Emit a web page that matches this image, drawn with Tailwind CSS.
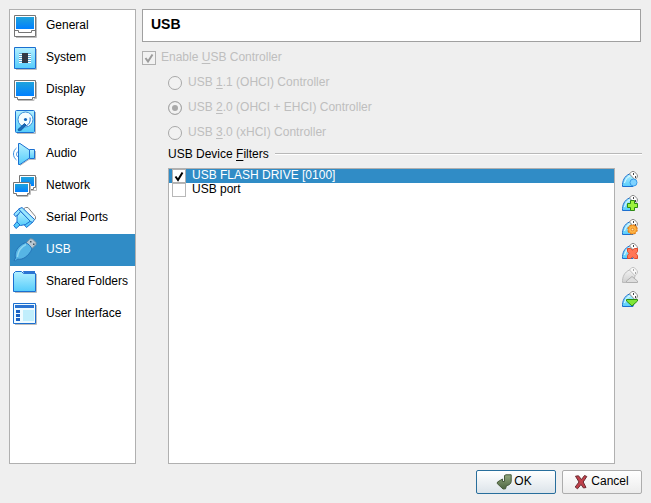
<!DOCTYPE html>
<html lang="en">
<head>
<meta charset="utf-8">
<meta name="viewport" content="width=device-width, initial-scale=1">
<title>USB Settings</title>
<script src="https://cdn.jsdelivr.net/npm/@tailwindcss/browser@4"></script>
</head>
<body class="bg-[#efefef] font-['Liberation_Sans',Arial,sans-serif] text-[12px] leading-[14px] text-black">

<svg class="absolute size-0" aria-hidden="true">
  <defs>
    <linearGradient id="screen" x1="0" y1="0" x2="0" y2="1"><stop offset="0" stop-color="#1fa3dc"/><stop offset="1" stop-color="#0080ff"/></linearGradient>
    <linearGradient id="ice" x1="0" y1="0" x2="0" y2="1"><stop offset="0" stop-color="#b4f0ff"/><stop offset="1" stop-color="#55ccfb"/></linearGradient>
    <linearGradient id="ok" x1="0" y1="0" x2="0" y2="1"><stop offset="0" stop-color="#93a87f"/><stop offset="1" stop-color="#4d6540"/></linearGradient>
    <linearGradient id="steel" x1="0" y1="0" x2="0" y2="1"><stop offset="0" stop-color="#f2f2f2"/><stop offset="1" stop-color="#cfcfcf"/></linearGradient>
    <symbol id="plug" viewBox="0 0 18 18">
      <path d="M1.500 16.500C1.200 11 3.500 6 8.500 4C11.500 5 13.500 7.500 14 10L12 16.500Z" fill="url(#ice)" stroke="#1d6fd0"/>
      <path d="M3.500 13C4.500 9.500 6 7.500 9 6" fill="none" stroke="#e6fbff"/>
      <path d="M8.500 4L10.500 1.800Q12 1 13.500 1.800L16 4.500Q17 6 16 7.500L14 9.800Z" fill="#fff" stroke="#8a8a8a"/>
      <path d="M12 3h1v2h-1zM14 6h1v2h-1z" fill="#444"/>
    </symbol>
  </defs>
</svg>

<div class="flex h-screen flex-col pl-[9px] pr-[9px] pt-[9px] pb-[9px]">
  <div class="flex min-h-0 flex-1 gap-[6px]">

    <nav class="w-[127px] shrink-0 border border-[#b0b0b0] bg-white" aria-label="Settings">
      <a href="#general" class="flex h-8 items-center gap-[9px] pl-[3px]">
        <svg class="size-6 shrink-0" viewBox="0 0 24 24"><path d="M3 23.500H23.500V3" fill="none" stroke="#bdbdbd"/><path d="M1.500 1.500h21v21h-21z" fill="#fff" stroke="#757575"/><path d="M3 3h18v12H3z" fill="url(#screen)"/><path d="M1.500 16.500h4v2h13v-2h4" fill="none" stroke="#757575"/></svg>
        <span class="pb-[2px]">General</span></a>
      <a href="#system" class="flex h-8 items-center gap-[9px] pl-[3px]">
        <svg class="size-6 shrink-0" viewBox="0 0 24 24"><path d="M3 23.500H23.500V3" fill="none" stroke="#bdbdbd"/><path d="M1.500 1.500h21v21h-21z" fill="url(#ice)" stroke="#1b6fd0"/><path d="M6 8.500h12M6 10.500h12M6 12.500h12M6 14.500h12M6 16.500h12" stroke="#fff"/><path d="M6 7.500h12M6 9.500h12M6 11.500h12M6 13.500h12M6 15.500h12" stroke="#5fa9d0"/><path d="M9 7h6v10H9z" fill="#343944"/></svg>
        <span class="pb-[2px]">System</span></a>
      <a href="#display" class="flex h-8 items-center gap-[9px] pl-[3px]">
        <svg class="size-6 shrink-0" viewBox="0 0 24 24"><path d="M5 22.500h16v-2h2.500V4" fill="none" stroke="#bdbdbd"/><path d="M1.500 2.500h21v17h-3v2h-15v-2h-3z" fill="#fff" stroke="#757575"/><path d="M3 4h18v14H3z" fill="url(#screen)"/></svg>
        <span class="pb-[2px]">Display</span></a>
      <a href="#storage" class="flex h-8 items-center gap-[9px] pl-[3px]">
        <svg class="size-6 shrink-0" viewBox="0 0 24 24"><path d="M4 23.500H22.500V2" fill="none" stroke="#bdbdbd"/><rect x="2.500" y=".5" width="19" height="22" rx="1" fill="url(#ice)" stroke="#1b6fd0"/><circle cx="12.500" cy="9.500" r="7.500" fill="#f4fdff" stroke="#3a8fd8"/><circle cx="12.500" cy="9.500" r="1.600" fill="#1266bd"/><path d="M17 7.500c1 5-2 8-5 8.500" fill="none" stroke="#1b6fd0"/><path d="M5 19.500L11.500 13.500L13 15L9 19.500C7.500 21 4.500 21 5 19.500Z" fill="#1769b8" stroke="#125aa5"/></svg>
        <span class="pb-[2px]">Storage</span></a>
      <a href="#audio" class="flex h-8 items-center gap-[9px] pl-[3px]">
        <svg class="size-6 shrink-0" viewBox="0 0 24 24"><path d="M7 23.500L16 17.500H22.500V9" fill="none" stroke="#bdbdbd"/><path d="M16.500 7.500h5v9h-5z" fill="url(#ice)" stroke="#1b6fd0"/><path d="M5.500 1.500h1.500l9.500 6.500v8L7 22.500H5.500z" fill="url(#ice)" stroke="#1b6fd0"/><path d="M3.500 6C-.5 9-.5 15 3.500 18M5 9.500C3 11 3 13.500 5 15" fill="none" stroke="#3a8fe0"/></svg>
        <span class="pb-[2px]">Audio</span></a>
      <a href="#network" class="flex h-8 items-center gap-[9px] pl-[3px]">
        <svg class="size-6 shrink-0" viewBox="0 0 24 24"><path d="M17 16.500h6.500V3" fill="none" stroke="#bdbdbd"/><path d="M6.500 1.500h16v12h-2v2h-14z" fill="#fff" stroke="#757575"/><path d="M8 3h13v9H8z" fill="url(#screen)"/><path d="M4 22.500h11v-2h2.500V10" fill="none" stroke="#bdbdbd"/><path d="M.5 8.500h16v11h-2v2h-11v-2h-3z" fill="#fff" stroke="#757575"/><path d="M2 10h13v8H2z" fill="url(#screen)"/></svg>
        <span class="pb-[2px]">Network</span></a>
      <a href="#serial" class="flex h-8 items-center gap-[9px] pl-[3px]">
        <svg class="size-6 shrink-0" viewBox="0 0 24 24">
          <path d="M10.500 3L12.500 1.500H15L22.500 10.500V13L20 14Z" fill="#fafafa" stroke="#858585"/>
          <path d="M4 15.500L.8 19.500L3 22.500L7.500 18.500Z" fill="#55ccfb" stroke="#1b6fd0"/>
          <path d="M6 3L.8 8L2.500 10.500L8.500 6.500Z" fill="#8fe2ff" stroke="#1b6fd0"/>
          <path d="M18 13L11.500 19L13.500 21.500L20 16Z" fill="#55ccfb" stroke="#1b6fd0"/>
          <path d="M7.500 5.500L4 10V16L7.500 19.500L12.500 18.500L17.500 15Z" fill="url(#ice)" stroke="#1b6fd0"/>
          <path d="M5.500 3L9 1.500L21.500 13.500L19.500 16.500L17.500 15.500Z" fill="#9be8ff" stroke="#1b6fd0"/>
        </svg>
        <span class="pb-[2px]">Serial Ports</span></a>
      <a href="#usb" aria-current="page" class="flex h-8 items-center gap-[9px] bg-[#308cc6] pl-[3px] text-white">
        <svg class="size-6 shrink-0" viewBox="0 0 24 24"><path d="M13 5L17 .8L19.500 1L23 4.500V6.500L18.500 11Z" fill="#bac8d2" stroke="#7890a0"/><path d="M17 3h1.500v1.500H17zM20 5.500h1.500V7H20z" fill="#3c5363"/><path d="M1 22.500L2.500 20C1 15 4 8 12.500 4.500C15 5.500 18 8.500 19 11C15.500 18.500 9 22.500 4.500 21L2.500 23Z" fill="#56b5e5" stroke="#2474b8"/><path d="M4.500 19C5 13.500 8 9 13 6.500" fill="none" stroke="#8dd6f2" stroke-width="1.500"/></svg>
        <span class="pb-[2px]">USB</span></a>
      <a href="#shared" class="flex h-8 items-center gap-[9px] pl-[3px]">
        <svg class="size-6 shrink-0" viewBox="0 0 24 24"><path d="M2 22.500H23.500V4" fill="none" stroke="#bdbdbd"/><path d="M.5 3.500L2.500 1.500h6l2 2h12v18H.5z" fill="url(#ice)" stroke="#1b6fd0"/><path d="M10 1h12v3H11z" fill="#2b74d2"/></svg>
        <span class="whitespace-nowrap pb-[2px]">Shared Folders</span></a>
      <a href="#interface" class="flex h-8 items-center gap-[9px] pl-[3px]">
        <svg class="size-6 shrink-0" viewBox="0 0 24 24"><path d="M2 22.500H23.500V3" fill="none" stroke="#bdbdbd"/><path d="M.5 1.500h22v20H.5z" fill="#effbff" stroke="#1b6fd0"/><path d="M2 3h19v3H2z" fill="#2b74d2"/><path d="M3 8h4v3H3zM3 12h4v3H3zM3 16h4v3H3z" fill="#1b62c4"/><path d="M10 8h11v11H10z" fill="#c0eefc"/></svg>
        <span class="whitespace-nowrap pb-[2px]">User Interface</span></a>
    </nav>

    <main class="flex min-w-0 flex-1 flex-col">
      <h1 class="mr-px flex h-[33px] shrink-0 items-center border border-[#a0a0a0] bg-white pb-[3px] pl-2 text-[14px] font-bold leading-4">USB</h1>

      <div class="mt-[6px] flex h-5 shrink-0 items-center gap-[5px] text-[#bebebe]">
        <span class="grid">
          <input id="enable" type="checkbox" checked disabled class="col-start-1 row-start-1 size-[14px] appearance-none border border-[#b0b0b0] bg-[#f2f2f2]">
          <svg class="pointer-events-none col-start-1 row-start-1 size-[14px]" viewBox="0 0 14 14"><path d="M3.500 7L6 10.500L10.500 3.500" fill="none" stroke="#9c9c9c" stroke-width="2"/></svg>
        </span>
        <label for="enable" class="pb-[2px]">Enable <u class="underline-offset-2">U</u>SB Controller</label>
      </div>

      <fieldset disabled class="ml-[26px] flex shrink-0 flex-col pt-[2px] text-[#bebebe]">
        <div class="flex h-[25px] items-center gap-[6px]"><input id="u1" name="ctl" type="radio" class="size-[14px] appearance-none rounded-full border border-[#a8a8a8] bg-[#f2f2f2]"><label for="u1" class="pb-[2px]">USB <u class="underline-offset-2">1</u>.1 (OHCI) Controller</label></div>
        <div class="flex h-[25px] items-center gap-[6px]"><input id="u2" name="ctl" type="radio" checked class="size-[14px] appearance-none rounded-full border border-[#a8a8a8] bg-[#a8a8a8] shadow-[inset_0_0_0_3px_#f2f2f2]"><label for="u2" class="pb-[2px]">USB <u class="underline-offset-2">2</u>.0 (OHCI + EHCI) Controller</label></div>
        <div class="flex h-[25px] items-center gap-[6px]"><input id="u3" name="ctl" type="radio" class="size-[14px] appearance-none rounded-full border border-[#a8a8a8] bg-[#f2f2f2]"><label for="u3" class="pb-[2px]">USB <u class="underline-offset-2">3</u>.0 (xHCI) Controller</label></div>
      </fieldset>

      <section class="ml-[26px] flex min-h-0 flex-1 flex-col">
        <div class="flex h-[23px] shrink-0 items-start gap-[6px] pt-[2px]">
          <h2>USB Device <u class="underline-offset-2">F</u>ilters</h2>
          <span class="mt-[6px] h-[2px] flex-1 border-b border-white bg-[#b8b8b8]"></span>
        </div>
        <div class="flex min-h-0 flex-1 gap-[6px]">
          <ul class="min-w-0 flex-1 border border-[#b0b0b0] bg-white">
            <li class="flex h-[14px] items-center gap-[6px] bg-[#308cc6] pl-[3px] text-white">
              <span class="grid">
                <input id="f1" type="checkbox" checked class="col-start-1 row-start-1 size-[14px] appearance-none border border-[#b0b0b0] bg-white">
                <svg class="pointer-events-none col-start-1 row-start-1 size-[14px]" viewBox="0 0 14 14"><path d="M3.500 7.500L6 11L10.500 3.500" fill="none" stroke="#000" stroke-width="2"/></svg>
              </span>
              <label for="f1" class="pb-[2px]">USB FLASH DRIVE [0100]</label>
            </li>
            <li class="flex h-[14px] items-center gap-[6px] pl-[3px]">
              <input id="f2" type="checkbox" class="size-[14px] appearance-none border border-[#b8b8b8] bg-white">
              <label for="f2" class="pb-[2px]">USB port</label>
            </li>
          </ul>
          <div class="flex w-[21px] shrink-0 flex-col gap-[6px] pt-[2px]" role="toolbar" aria-label="Filter actions">
            <button aria-label="Add empty filter" class="size-[18px]"><svg class="size-[18px]" viewBox="0 0 18 18"><use href="#plug"/><circle cx="12.500" cy="12.500" r="3.500" fill="#7fd2ff" stroke="#3a9be8"/></svg></button>
            <button aria-label="Add filter from device" class="size-[18px]"><svg class="size-[18px]" viewBox="0 0 18 18"><use href="#plug"/><path d="M9.500 6.500h4v3h3v4h-3v3h-4v-3h-3v-4h3z" fill="#9df23c" stroke="#2e8b12"/></svg></button>
            <button aria-label="Edit filter" class="size-[18px]"><svg class="size-[18px]" viewBox="0 0 18 18"><use href="#plug"/><circle cx="11.500" cy="11.500" r="4.500" fill="#ffb545" stroke="#dd7512" stroke-width="1.500" stroke-dasharray="2.300 1.230"/><circle cx="11.500" cy="11.500" r="4" fill="#ffb545" stroke="#ea8a20" stroke-width=".6"/><circle cx="11.500" cy="11.500" r="1.300" fill="#ffe7a8" stroke="#d96a0b" stroke-width=".7"/></svg></button>
            <button aria-label="Remove filter" class="size-[18px]"><svg class="size-[18px]" viewBox="0 0 18 18"><use href="#plug"/><path d="M6.500 6.500h3l2 1.500l2-1.500h3v3L15 11.500l1.500 2v3h-3l-2-1.500l-2 1.500h-3v-3L8 11.500l-1.500-2z" fill="#ff7656" stroke="#e0492b"/></svg></button>
            <button disabled aria-label="Move filter up" class="size-[18px]"><svg class="size-[18px]" viewBox="0 0 18 18"><path d="M1.500 16.500C1.200 11 3.500 6 8.500 4C11.500 5 13.500 7.500 14 10L12 16.500Z" fill="url(#steel)" stroke="#bcbcbc"/><path d="M8.500 4L10.500 1.800Q12 1 13.500 1.800L16 4.500Q17 6 16 7.500L14 9.800Z" fill="#f8f8f8" stroke="#c4c4c4"/><path d="M12 3h1v2h-1zM14 6h1v2h-1z" fill="#aaa"/><path d="M5.500 16.500V15L11 10.500L16.500 15V16.500Z" fill="#dedede" stroke="#b0b0b0"/></svg></button>
            <button aria-label="Move filter down" class="size-[18px]"><svg class="size-[18px]" viewBox="0 0 18 18"><use href="#plug"/><path d="M5.500 9.500h11v1.500L11 16L5.500 11z" fill="#80e636" stroke="#2e8b12"/></svg></button>
          </div>
        </div>
      </section>
    </main>
  </div>

  <footer class="flex shrink-0 justify-end gap-[6px] pt-[6px]">
    <button class="flex h-6 w-20 items-center justify-center gap-[2px] rounded-[2px] border border-[#286e9c] bg-linear-to-b from-white to-[#dce4ea] pr-1">
      <svg class="size-4" viewBox="0 0 16 16"><path d="M8.500 1.500L10 .8H15.200V7.500C15 10 12.500 11.500 10.500 11.500L9.500 14.800L7 15L1.200 9.500L1.500 8L6.500 5V7.500H8.500Z" fill="url(#ok)" stroke="#465a3b"/></svg>
      <span class="pb-[2px]">OK</span></button>
    <button class="flex h-6 w-20 items-center justify-center gap-[2px] rounded-[2px] border border-[#adadad] bg-linear-to-b from-white to-[#ececec] pr-[2px]">
      <svg class="size-4" viewBox="0 0 16 16"><path d="M2.500 2.200L5.500 1.800L8.500 5.500L11.500 1.500L13.800 2.500L10.200 8L13 13.500L10.500 14L8 10.500L4.500 14.800L2.200 13L6 8Z" fill="#c0404a" stroke="#6b2c32"/></svg>
      <span class="pb-[2px]">Cancel</span></button>
  </footer>
</div>
</body>
</html>
